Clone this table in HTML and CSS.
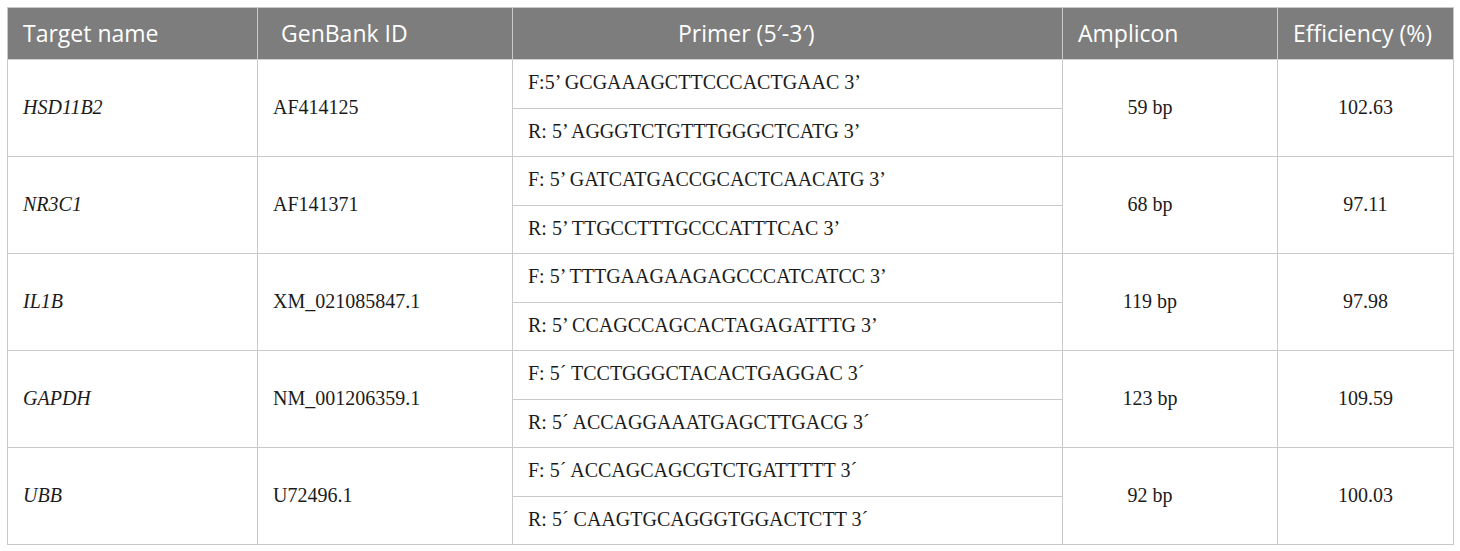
FILE: index.html
```html
<!DOCTYPE html>
<html>
<head>
<meta charset="utf-8">
<link rel="stylesheet" href="styles.css">
</head>
<body>
<div class="wrap">
<table class="primers">
  <colgroup>
    <col class="c1"><col class="c2"><col class="c3"><col class="c4"><col class="c5">
  </colgroup>
  <thead>
    <tr>
      <th class="h-target">Target name</th>
      <th class="h-gen">GenBank ID</th>
      <th class="h-primer">Primer (5′-3′)</th>
      <th class="h-amp">Amplicon</th>
      <th class="h-eff">Efficiency (%)</th>
    </tr>
  </thead>
  <tbody>
    <tr>
      <td rowspan="2" class="gene">HSD11B2</td>
      <td rowspan="2" class="gen">AF414125</td>
      <td class="primer">F:5’ GCGAAAGCTTCCCACTGAAC 3’</td>
      <td rowspan="2" class="amp">59 bp</td>
      <td rowspan="2" class="eff">102.63</td>
    </tr>
    <tr><td class="primer">R: 5’ AGGGTCTGTTTGGGCTCATG 3’</td></tr>
    <tr>
      <td rowspan="2" class="gene">NR3C1</td>
      <td rowspan="2" class="gen">AF141371</td>
      <td class="primer">F: 5’ GATCATGACCGCACTCAACATG 3’</td>
      <td rowspan="2" class="amp">68 bp</td>
      <td rowspan="2" class="eff">97.11</td>
    </tr>
    <tr><td class="primer">R: 5’ TTGCCTTTGCCCATTTCAC 3’</td></tr>
    <tr>
      <td rowspan="2" class="gene">IL1B</td>
      <td rowspan="2" class="gen">XM_021085847.1</td>
      <td class="primer">F: 5’ TTTGAAGAAGAGCCCATCATCC 3’</td>
      <td rowspan="2" class="amp">119 bp</td>
      <td rowspan="2" class="eff">97.98</td>
    </tr>
    <tr><td class="primer">R: 5’ CCAGCCAGCACTAGAGATTTG 3’</td></tr>
    <tr>
      <td rowspan="2" class="gene">GAPDH</td>
      <td rowspan="2" class="gen">NM_001206359.1</td>
      <td class="primer">F: 5´ TCCTGGGCTACACTGAGGAC 3´</td>
      <td rowspan="2" class="amp">123 bp</td>
      <td rowspan="2" class="eff">109.59</td>
    </tr>
    <tr><td class="primer">R: 5´ ACCAGGAAATGAGCTTGACG 3´</td></tr>
    <tr>
      <td rowspan="2" class="gene">UBB</td>
      <td rowspan="2" class="gen">U72496.1</td>
      <td class="primer">F: 5´ ACCAGCAGCGTCTGATTTTT 3´</td>
      <td rowspan="2" class="amp">92 bp</td>
      <td rowspan="2" class="eff">100.03</td>
    </tr>
    <tr><td class="primer">R: 5´ CAAGTGCAGGGTGGACTCTT 3´</td></tr>
  </tbody>
</table>
</div>
</body>
</html>
```
FILE: styles.css
```css
html, body {
  margin: 0;
  padding: 0;
  background: #ffffff;
}
.wrap {
  padding: 7px 0 0 7px;
}
.primers {
  border-collapse: collapse;
  table-layout: fixed;
  width: 1446px;
  font-family: "Liberation Serif", "Times New Roman", serif;
  font-size: 20px;
  color: #1b1b1b;
}
.c1 { width: 250px; }
.c2 { width: 255px; }
.c3 { width: 550px; }
.c4 { width: 215px; }
.c5 { width: 176px; }

.primers th {
  background: #7d7d7d;
  color: #ffffff;
  font-family: "Open Sans", "Noto Sans", sans-serif;
  font-weight: 400;
  font-size: 23px;
  height: 49px;
  padding: 0 0 2px 15px;
  text-align: left;
  border: 1px solid #c9c9c9;
  border-bottom: 1px solid #d0d0d0;
}
.primers th + th {
  border-left: 1px solid #a6a6a6;
}
.primers th.h-gen { padding-left: 23px; }
.primers th.h-primer { padding-left: 165px; }

.primers td {
  border: 1px solid #c9c9c9;
  height: 45.5px;
  padding: 0 0 2px 15px;
  vertical-align: middle;
  text-align: left;
}
.primers td.gene { font-style: italic; }
.primers td.amp { text-align: center; padding: 0 40px 2px 0; }
.primers td.eff { text-align: center; padding: 0 0 2px 0; }
```
